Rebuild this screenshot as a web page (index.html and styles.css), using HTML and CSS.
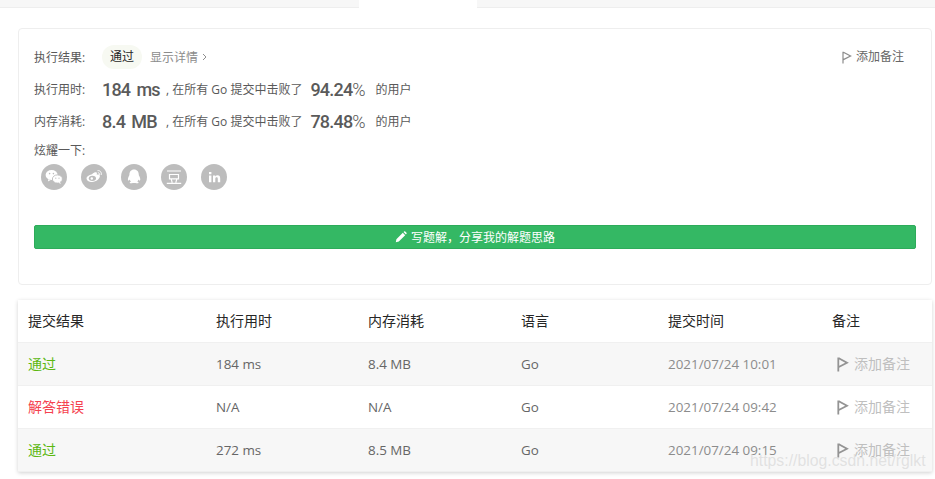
FILE: index.html
```html
<!DOCTYPE html>
<html lang="zh">
<head>
<meta charset="utf-8">
<title>提交结果</title>
<link rel="stylesheet" href="styles.css">
</head>
<body>
<div class="tabs"><div class="tab first-tab"></div><div class="tab active"></div><div class="tab"></div></div>
<section class="card">
  <div class="note-link">
    <svg class="flag" viewBox="0 0 10 13"><path d="M1 .8v11.700M1.400 1.200 8.600 5 1.400 8.600" fill="none" stroke="#8c8c8c" stroke-width="1.200"/></svg>
    <span>添加备注</span>
  </div>
  <div class="line first">
    <span class="label">执行结果:</span>
    <span class="pill">通过</span>
    <span class="details">显示详情</span>
    <svg class="chev" viewBox="0 0 5 8"><path d="M1 1l3 3-3 3" fill="none" stroke="#8f8f8f" stroke-width="1"/></svg>
  </div>
  <div class="line">
    <span class="label">执行用时:</span>
    <span class="big val">184 ms</span>
    <span class="text">, 在所有 Go 提交中击败了</span>
    <span class="big pct">94.24<i>%</i></span>
    <span class="text">的用户</span>
  </div>
  <div class="line">
    <span class="label">内存消耗:</span>
    <span class="big val">8.4 MB</span>
    <span class="text">, 在所有 Go 提交中击败了</span>
    <span class="big pct">78.48<i>%</i></span>
    <span class="text">的用户</span>
  </div>
  <div class="share-label">炫耀一下:</div>
  <div class="share">
    <span class="circle"><svg viewBox="0 0 26 26"><ellipse cx="10.600" cy="11" rx="6" ry="5" fill="#fff"/><path d="M7.500 15l-.6 2.400 2.800-1.400z" fill="#fff"/><ellipse cx="16.400" cy="15" rx="5" ry="4.100" fill="#fff" stroke="#bdbdbd" stroke-width=".9"/><path d="M18.800 18l1.200 2-2.600-1.200z" fill="#fff"/><circle cx="8.600" cy="9.600" r=".8" fill="#bdbdbd"/><circle cx="12.400" cy="9.600" r=".8" fill="#bdbdbd"/><circle cx="14.800" cy="14.200" r=".6" fill="#bdbdbd"/><circle cx="18" cy="14.200" r=".6" fill="#bdbdbd"/></svg></span>
    <span class="circle"><svg viewBox="0 0 26 26"><path d="M11 10.200c2.200-2 4.200-2.300 4.800-1.400.3.600.1 1.300-.1 2 2-.6 3.200-.1 3.200 1.300 0 2.700-3.600 5.900-7.700 5.900-3.200 0-5.700-1.500-5.700-3.800 0-1.400 2.300-3.400 5.500-4z" fill="#fff"/><ellipse cx="11.400" cy="14.300" rx="3.600" ry="2.600" fill="#bdbdbd"/><circle cx="10.800" cy="14.500" r="1.200" fill="#fff"/><path d="M16.500 6.700c2.600-.5 4.500 1.800 3.600 4.300M16.800 8.800c1.200-.2 2 .8 1.600 2" fill="none" stroke="#fff" stroke-width="1"/></svg></span>
    <span class="circle"><svg viewBox="0 0 26 26"><path d="M13 5.500c3.200 0 4.800 2.400 4.800 5.200 0 .7.300 1 .7 1.900.8 1.700 1.100 3.600.4 4-.5.200-1-.6-1.400-1.200-.2 1-.7 1.700-1.300 2.200 1 .3 1.500.8 1.400 1.200-.2.500-1.900.7-3.100.3-.5-.2-.9-.2-1.300-.2s-1 0-1.500.2c-1.200.4-2.800.2-3-.3-.1-.4.400-.9 1.400-1.200-.7-.5-1.200-1.200-1.400-2.200-.4.600-.9 1.400-1.400 1.200-.7-.4-.4-2.300.4-4 .4-.9.700-1.200.7-1.900 0-2.800 1.600-5.200 4.600-5.200z" fill="#fff"/></svg></span>
    <span class="circle"><svg viewBox="0 0 26 26"><path d="M6 7h14M8.500 10.500h9v4.300h-9zM10.200 15.200l1 3.500M15.800 15.200l-1 3.500M5.800 19.300h14.400" fill="none" stroke="#fff" stroke-width="1.200"/></svg></span>
    <span class="circle"><svg viewBox="0 0 26 26"><path d="M8 8h2.400v2.200H8zM8 11.500h2.400v6.800H8zM12 11.500h2.300v1c.5-.8 1.300-1.200 2.200-1.200 1.900 0 2.700 1.200 2.700 3.100v3.900h-2.400v-3.500c0-1-.3-1.600-1.200-1.600s-1.300.7-1.300 1.700v3.400H12z" fill="#fff"/></svg></span>
  </div>
  <button class="cta" type="button">
    <svg viewBox="0 0 12 12"><path d="M.8 11.200l.6-3L7.800 1.800l2.400 2.400-6.400 6.400zM8.500 1.100l.7-.6c.3-.3.700-.3 1 0l1.300 1.300c.3.300.3.700 0 1l-.6.700z" fill="#fff"/></svg>
    <span class="cta-text">写题解&#65292;分享我的解题思路</span>
  </button>
</section>
<section class="table">
  <div class="row head"><span>提交结果</span><span>执行用时</span><span>内存消耗</span><span>语言</span><span>提交时间</span><span>备注</span></div>
  <div class="row alt"><span class="cjk ok">通过</span><span>184 ms</span><span>8.4 MB</span><span>Go</span><span class="time">2021/07/24 10:01</span><span class="cjk remark"><svg viewBox="0 0 12 15"><path d="M1.300.5v14M1.800 1.200 10 5.800 1.800 10" fill="none" stroke="#949494" stroke-width="1.800"/></svg>添加备注</span></div>
  <div class="row"><span class="cjk bad">解答错误</span><span>N/A</span><span>N/A</span><span>Go</span><span class="time">2021/07/24 09:42</span><span class="cjk remark"><svg viewBox="0 0 12 15"><path d="M1.300.5v14M1.800 1.200 10 5.800 1.800 10" fill="none" stroke="#949494" stroke-width="1.800"/></svg>添加备注</span></div>
  <div class="row alt"><span class="cjk ok">通过</span><span>272 ms</span><span>8.5 MB</span><span>Go</span><span class="time">2021/07/24 09:15</span><span class="cjk remark"><svg viewBox="0 0 12 15"><path d="M1.300.5v14M1.800 1.200 10 5.800 1.800 10" fill="none" stroke="#949494" stroke-width="1.800"/></svg>添加备注</span></div>
</section>
<div class="watermark">https://blog.csdn.net/rglkt</div>
</body>
</html>
```
FILE: styles.css
```css
* { box-sizing: border-box; }
html, body { height: 100%; }
body {
  margin: 0;
  height: 479px;
  overflow: hidden;
  position: relative;
  background: #fff;
  color: #595959;
  font-family: "Open Sans", "Noto Sans CJK SC", sans-serif;
  font-size: 12px;
}
.tabs { display: flex; height: 8px; }
.tab { flex: 1; background: #f7f7f7; border-bottom: 1px solid #eee; }
.tab.first-tab { flex: 0 0 359px; }
.tab.active { flex: 0 0 118px; background: #fff; border-bottom: 0; }
.card {
  position: relative;
  margin: 20px 3px 0 18px;
  height: 257px;
  border: 1px solid #eee;
  border-radius: 4px;
  padding: 16px 15px 0;
}
.note-link {
  position: absolute;
  top: 20px;
  right: 27px;
  display: flex;
  align-items: center;
  gap: 4px;
  color: #666;
  line-height: 16px;
}
.flag { width: 10px; height: 13px; }
.line { display: flex; align-items: center; height: 32px; white-space: nowrap; }
.line.first { height: 24px; margin-bottom: 4px; }
.label { width: 68px; color: #595959; }
.pill {
  width: 40px;
  height: 24px;
  line-height: 24px;
  text-align: center;
  background: #f7f9f2;
  border-radius: 12px;
  color: #262626;
}
.details { margin-left: 8px; color: #8c8c8c; }
.chev { width: 5px; height: 8px; margin-left: 4px; }
.big {
  font-family: Roboto, sans-serif;
  font-size: 18px;
  font-weight: 500;
  color: #5a5a5a;
  letter-spacing: -.8px;
  word-spacing: 2.500px;
}
.big i { font-style: normal; font-weight: 300; letter-spacing: 0; }
.val { width: 64px; }
.text { color: #595959; font-size: 12px; }
.pct { width: 56px; margin: 0 9px 0 8px; }
.share-label { margin-top: 6px; line-height: 16px; }
.share { display: flex; gap: 14px; margin: 5px 0 0 7px; }
.circle { width: 26px; height: 26px; border-radius: 50%; background: #bdbdbd; }
.circle svg { display: block; width: 26px; height: 26px; }
.cta {
  display: flex;
  align-items: center;
  justify-content: center;
  gap: 4px;
  width: 882px;
  height: 24px;
  margin-top: 35px;
  padding: 0;
  background: #34b864;
  border: 1px solid #2dab5a;
  border-radius: 2px;
  color: #fff;
  font: inherit;
}
.cta svg { width: 12px; height: 12px; }
.cta-text { font-family: "Noto Sans CJK SC", sans-serif; padding-bottom: 2px; }
.table {
  margin: 15px 3px 0 18px;
  border-bottom: 1px solid #f0f0f0;
  box-shadow: 0 1px 4px rgba(0, 0, 0, .18);
}
.row {
  display: grid;
  grid-template-columns: 188px 152px 153px 147px 164px 1fr;
  align-items: center;
  height: 43px;
  padding-left: 10px;
  font-size: 13.400px;
  color: #666;
  border-top: 1px solid #f0f0f0;
  white-space: nowrap;
}
.row.head {
  height: 42px;
  border-top: 0;
  color: #262626;
  font-family: "Noto Sans CJK SC", sans-serif;
  font-size: 14px;
  padding-bottom: 2px;
}
.row.alt { background: #f7f7f7; }
.cjk { font-family: "Noto Sans CJK SC", sans-serif; font-size: 14px; padding-bottom: 2px; }
.ok { color: #5cb811; }
.bad { color: #f5424f; }
.time { color: #8c8c8c; }
.remark { display: flex; align-items: center; gap: 5px; margin-left: 5px; color: #bfbfbf; }
.remark svg { width: 12px; height: 15px; margin-top: 2px; }
.watermark {
  position: absolute;
  left: 750px;
  top: 452px;
  font-family: "Liberation Sans", sans-serif;
  font-size: 15.800px;
  color: rgba(215, 215, 215, .7);
  white-space: nowrap;
}
```
